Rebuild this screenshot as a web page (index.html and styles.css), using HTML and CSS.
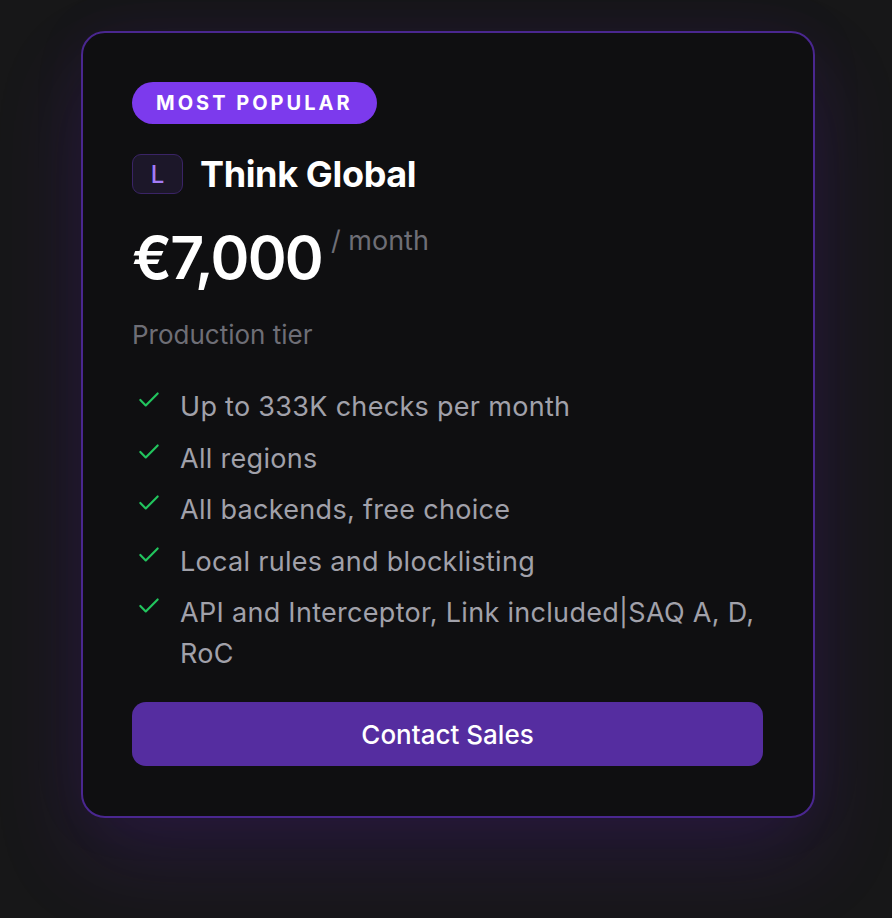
FILE: index.html
```html
<!doctype html>
<html lang="en">
  <head>
    <meta charset="UTF-8" />
    <meta name="viewport" content="width=device-width, initial-scale=1.0" />
    <title>Pricing - Think Global</title>
    <link rel="stylesheet" href="styles.css">
  </head>
  <body>
    <div class="plan-card">
      <span class="badge">MOST POPULAR</span>

      <div class="plan-title">
        <span class="plan-icon">L</span>
        <h2>Think Global</h2>
      </div>

      <div class="price">
        <span class="amount">€7,000</span>
        <span class="period">/ month</span>
      </div>

      <div class="tier">Production tier</div>

      <ul class="features">
        <li>
          <svg class="check" viewBox="0 0 24 24"><path d="M20 6 9 17l-5-5" /></svg>
          <span>Up to 333K checks per month</span>
        </li>
        <li>
          <svg class="check" viewBox="0 0 24 24"><path d="M20 6 9 17l-5-5" /></svg>
          <span>All regions</span>
        </li>
        <li>
          <svg class="check" viewBox="0 0 24 24"><path d="M20 6 9 17l-5-5" /></svg>
          <span>All backends, free choice</span>
        </li>
        <li>
          <svg class="check" viewBox="0 0 24 24"><path d="M20 6 9 17l-5-5" /></svg>
          <span>Local rules and blocklisting</span>
        </li>
        <li>
          <svg class="check" viewBox="0 0 24 24"><path d="M20 6 9 17l-5-5" /></svg>
          <span>API and Interceptor, Link included|SAQ A, D, RoC</span>
        </li>
      </ul>

      <button class="cta">Contact Sales</button>
    </div>
  </body>
</html>
```

FILE: styles.css
```css
body {
  font-family: Inter, 'Noto Sans', 'Liberation Sans', sans-serif;
  margin: 0;
  padding: 31px 77px 0 81px;
  height: 918px;
  box-sizing: border-box;
  overflow: hidden;
  background-color: #171718;
  color: #fff;
}
.plan-card {
  border: 2px solid #4a2790;
  border-radius: 24px;
  background-color: #0f0f11;
  padding: 49px 50px 50px 49px;
  box-shadow: 0 40px 90px rgba(109, 40, 217, 0.16), 0 0 60px rgba(109, 40, 217, 0.06);
}
.badge {
  display: inline-block;
  height: 42px;
  line-height: 42px;
  padding: 0 24px;
  border-radius: 21px;
  background-color: #7c3aed;
  font-size: 20px;
  font-weight: 700;
  letter-spacing: 3px;
}
.plan-title {
  display: flex;
  align-items: center;
  gap: 17px;
  margin-top: 28px;
}
.plan-icon {
  width: 49px;
  height: 38px;
  border: 1px solid #3a2466;
  border-radius: 9px;
  background-color: #1c1729;
  color: #a37bf5;
  font-size: 24px;
  font-weight: 500;
  display: flex;
  align-items: center;
  justify-content: center;
}
.plan-title h2 {
  margin: 0;
  font-size: 36px;
  font-weight: 700;
  letter-spacing: -0.01em;
}
.price {
  display: flex;
  align-items: flex-start;
  gap: 9px;
  margin-top: 32px;
}
.amount {
  font-size: 59px;
  line-height: 60px;
  font-weight: 600;
  letter-spacing: -0.03em;
}
.period {
  font-size: 27px;
  line-height: 25px;
  color: #6e6e76;
}
.tier {
  margin-top: 27px;
  font-size: 26px;
  line-height: 39px;
  color: #6e6e76;
}
.features {
  list-style: none;
  margin: 32px 0 0;
  padding: 0;
  display: flex;
  flex-direction: column;
  gap: 10.5px;
}
.features li {
  display: flex;
  align-items: flex-start;
  gap: 18px;
  font-size: 27px;
  line-height: 41px;
  letter-spacing: 0.3px;
  color: #a1a1aa;
}
.check {
  flex: none;
  width: 26px;
  height: 26px;
  margin: 1px 0 0 4px;
  fill: none;
  stroke: #22c55e;
  stroke-width: 2;
  stroke-linecap: round;
  stroke-linejoin: round;
}
.cta {
  display: block;
  width: 100%;
  height: 64px;
  margin-top: 28px;
  border: none;
  border-radius: 14px;
  background-color: #552da0;
  color: #fff;
  font-family: inherit;
  font-size: 26px;
  font-weight: 500;
  cursor: pointer;
}
```
